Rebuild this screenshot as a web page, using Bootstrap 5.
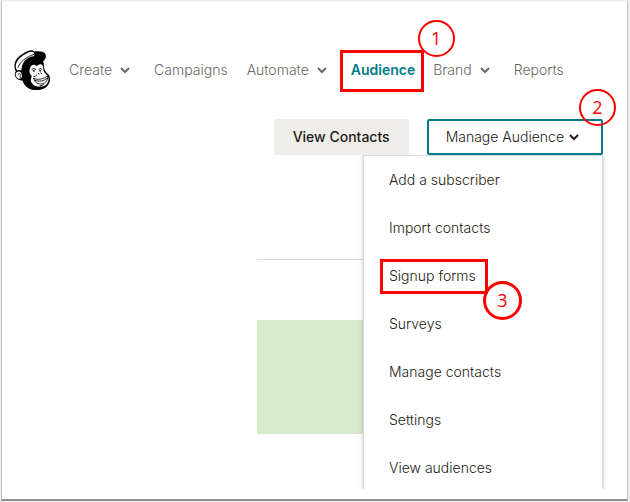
<!DOCTYPE html>
<html lang="en">
<head>
<meta charset="utf-8">
<meta name="viewport" content="width=device-width, initial-scale=1">
<title>Audience</title>
<link href="https://cdn.jsdelivr.net/npm/bootstrap@5.3.0/dist/css/bootstrap.min.css" rel="stylesheet">
<style>
  :root { --ink: #241c15; --teal: #007c89; --callout: #fd0000; }
  body { font-family: Inter, "Liberation Sans", sans-serif; font-size: 14px; font-weight: 300; line-height: 20px; color: var(--ink); background: #ececec; }
  .page-frame { margin: 1px 2px 1px 1px; min-height: calc(100vh - 2px); background: #fff; border: 1px solid #c4c4c4; border-top-color: #f4f4f4; border-bottom: 2px solid #909090; padding: 48px 24px 0 12px; }
  .logo { width: 36px; height: 40px; }
  .main-nav { gap: 19px; margin-left: 19px; }
  .main-nav .nav-link { padding: 0; color: #6b6763; display: flex; align-items: center; gap: 8px; white-space: nowrap; }
  .main-nav .with-menu { margin-right: 5px; }
  .main-nav .nav-link.active { color: var(--teal); font-weight: 600; margin-left: 5px; margin-right: -1px; }
  .chevron { width: 10px; height: 8px; fill: none; stroke: currentColor; stroke-width: 2; }
  .actions { margin-top: 29px; gap: 18px; }
  .btn-page { --bs-btn-font-size: 14px; --bs-btn-font-weight: 300; --bs-btn-line-height: 20px; --bs-btn-padding-y: 6px; --bs-btn-padding-x: 17px; --bs-btn-border-width: 2px; --bs-btn-border-radius: 2px; --bs-btn-color: var(--ink); }
  .btn-view { --bs-btn-bg: #efeeea; --bs-btn-border-color: #efeeea; --bs-btn-font-weight: 500; }
  .btn-manage, .btn-manage.show { background: #fff; border-color: var(--teal); color: var(--ink); display: flex; align-items: center; gap: 5px; padding-right: 22px; }
  .audience-menu { top: 100%; right: 0; width: 240px; margin: 0; padding: 0; font-size: 14px; border: 1px solid #dadada; border-bottom: 0; border-radius: 0; box-shadow: 0 0 4px rgba(0,0,0,.25); clip-path: inset(0 -6px 0 -6px); }
  .audience-menu .dropdown-item { padding: 14px 25px; color: var(--ink); font-weight: 300; }
  .audience-menu li:last-child .dropdown-item { padding-bottom: 11px; }
  .summary { width: 346px; margin-top: 104px; border-top: 1px solid #d9d9d9; padding-top: 60px; }
  .summary-panel { height: 114px; background: #d8eacc; }
  .callout-box { position: absolute; border: 3px solid var(--callout); pointer-events: none; }
  .callout-number { position: absolute; z-index: 1010; width: 37px; height: 37px; border: 2px solid var(--callout); border-radius: 50%; color: var(--callout); font: 18px/33px "Open Sans", sans-serif; text-align: center; }
  .box-audience { inset: -10px -9px -12px -11px; }
  .number-1 { left: 67px; top: -40px; }
  .number-2 { right: -13px; top: -30px; }
  .box-signup { left: 16px; top: 7px; width: 108px; height: 35px; }
  .number-3 { left: 119px; top: 29px; width: 39px; height: 39px; border-width: 3px; }
</style>
</head>
<body>
<div class="page-frame">
  <header class="d-flex align-items-center">
    <a href="#" class="d-flex text-black" aria-label="Home">
      <svg class="logo" viewBox="44 32 104 115" aria-hidden="true">
        <path d="M49 94C40 76 47 56 67 44C80 35 95 28 103 36C116 35 131 36 135 44C138 54 134 60 128 64C132 71 130 80 132 88C136 94 138 98 143 101C151 112 150 126 139 137C128 149 102 151 87 143C78 138 72 130 68 120C57 121 49 114 46 105C46 100 47 97 49 94Z"/>
        <path fill="#fff" d="M53 91C44 77 51 60 69 48C82 39 95 33 101 39C104 43 104 46 101 50C90 51 78 58 73 66C67 74 66 83 65 92C61 89 57 89 53 91ZM51 97C57 91 66 95 67 105C68 114 60 117 54 113C48 109 47 101 51 97ZM90 85C92 74 104 71 110 79C115 72 123 71 127 77C129 83 128 89 131 95C134 99 138 103 141 106C147 115 143 128 134 134C121 141 101 137 95 126C90 119 95 113 95 107C89 100 87 94 90 85Z"/>
        <path fill="none" stroke="#000" stroke-width="2.5" stroke-linecap="round" d="M56 82C61 66 77 53 102 44M56 102C60 98 65 101 63 105Q60 107 62 111M96 87Q102 83 107 88M116 87Q120 83 124 87M114 99L117 101M121 98L124 100M110 104Q106 108 101 109M101 114C113 119 128 116 141 107C142 121 134 130 120 130C111 130 104 125 101 114ZM104 119C117 125 130 121 139 114M120 135Q126 135 129 132"/>
        <path d="M98 90H104V94H98ZM117 90H122V94H117Z"/>
      </svg>
    </a>
    <nav class="nav flex-nowrap main-nav" aria-label="Main">
      <a class="nav-link with-menu" href="#">Create <svg class="chevron" viewBox="0 0 10 8" aria-hidden="true"><path d="M1 2l4 4 4-4"/></svg></a>
      <a class="nav-link" href="#">Campaigns</a>
      <a class="nav-link" href="#">Automate <svg class="chevron" viewBox="0 0 10 8" aria-hidden="true"><path d="M1 2l4 4 4-4"/></svg></a>
      <a class="nav-link active position-relative" href="#" aria-current="page">Audience<span class="callout-box box-audience"></span><span class="callout-number number-1">1</span></a>
      <a class="nav-link with-menu" href="#">Brand <svg class="chevron" viewBox="0 0 10 8" aria-hidden="true"><path d="M1 2l4 4 4-4"/></svg></a>
      <a class="nav-link" href="#">Reports</a>
    </nav>
  </header>
  <main>
    <div class="actions d-flex justify-content-end">
      <button type="button" class="btn btn-page btn-view">View Contacts</button>
      <div class="dropdown">
        <button type="button" class="btn btn-page btn-manage show" data-bs-toggle="dropdown" data-bs-display="static" aria-expanded="true">Manage Audience <svg class="chevron" viewBox="0 0 10 8" aria-hidden="true"><path d="M1 2l4 4 4-4"/></svg></button>
        <span class="callout-number number-2">2</span>
        <ul class="dropdown-menu audience-menu show">
          <li><a class="dropdown-item" href="#">Add a subscriber</a></li>
          <li><a class="dropdown-item" href="#">Import contacts</a></li>
          <li class="position-relative"><a class="dropdown-item" href="#">Signup forms</a><span class="callout-box box-signup"></span><span class="callout-number number-3">3</span></li>
          <li><a class="dropdown-item" href="#">Surveys</a></li>
          <li><a class="dropdown-item" href="#">Manage contacts</a></li>
          <li><a class="dropdown-item" href="#">Settings</a></li>
          <li><a class="dropdown-item" href="#">View audiences</a></li>
        </ul>
      </div>
    </div>
    <section class="summary ms-auto" aria-label="Summary"><div class="summary-panel"></div></section>
  </main>
</div>
<script src="https://cdn.jsdelivr.net/npm/bootstrap@5.3.0/dist/js/bootstrap.bundle.min.js"></script>
</body>
</html>
